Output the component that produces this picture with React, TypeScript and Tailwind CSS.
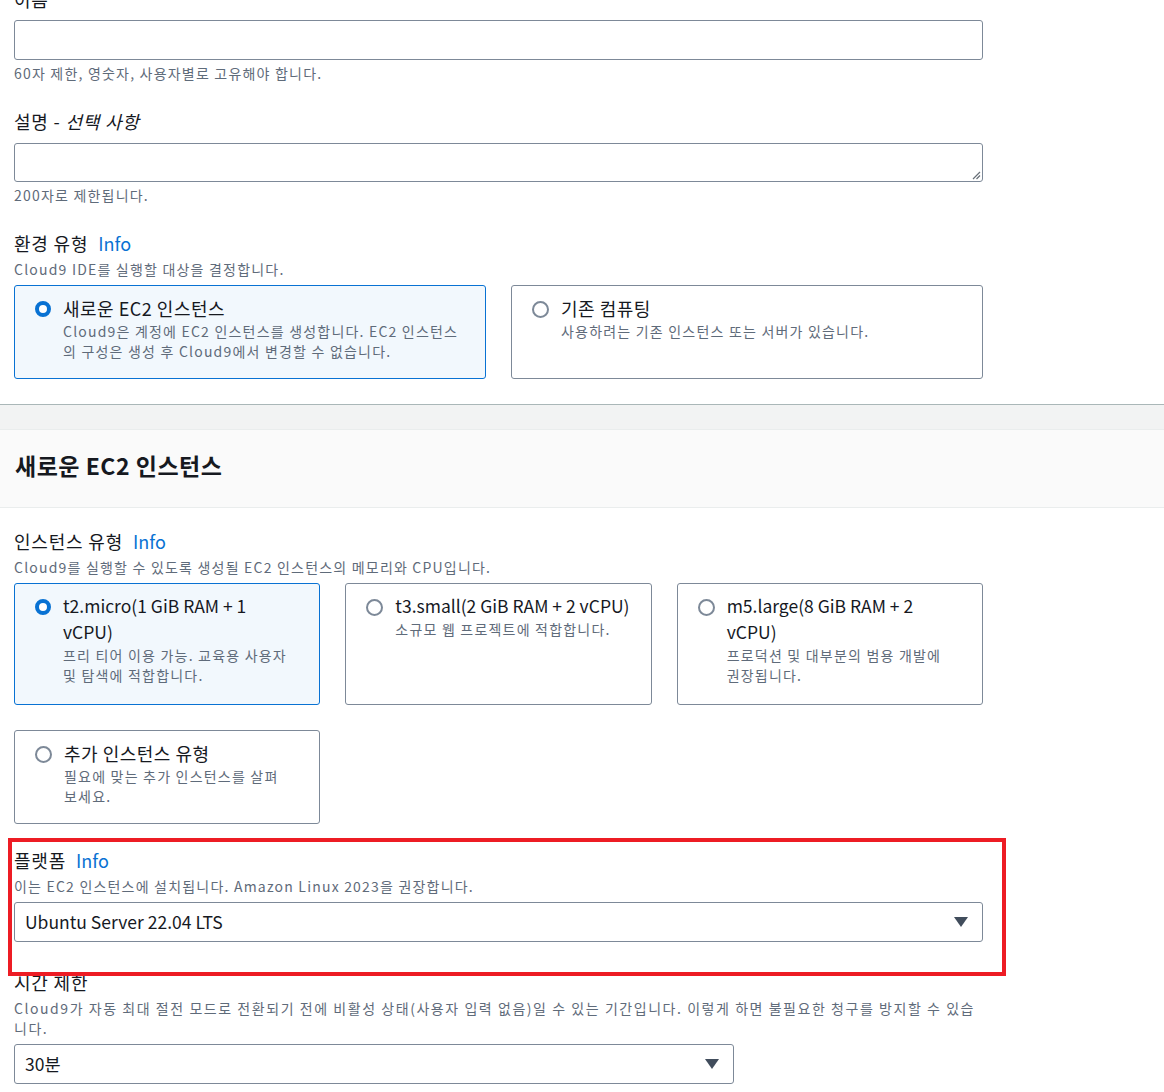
const font = { fontFamily: '"Noto Sans CJK KR", "Noto Sans", sans-serif' }

function Radio({ checked }: { checked?: boolean }) {
  return checked ? (
    <span className="mt-[6px] block h-4 w-4 shrink-0 rounded-full border-[4px] border-[#0972d3] bg-white" />
  ) : (
    <span className="mt-[6px] block h-[17px] w-[17px] shrink-0 rounded-full border-2 border-[#7d8998] bg-white" />
  )
}

function Card({
  title,
  desc,
  checked,
  latin,
  className = '',
}: {
  title: string
  desc: string
  checked?: boolean
  latin?: boolean
  className?: string
}) {
  return (
    <div
      className={
        'flex gap-[12px] rounded-[3px] border pl-5 pr-3 pt-[9px] pb-4 ' +
        (checked ? 'border-[#0972d3] bg-[#f2f8fd] ' : 'border-[#7d8998] bg-white ') +
        className
      }
    >
      <Radio checked={checked} />
      <div>
        <div
          className={
            'whitespace-pre-line leading-[26px] text-[#16191f] ' +
            (latin ? 'text-[17.5px]' : 'text-[18px] tracking-[0.5px]')
          }
        >
          {title}
        </div>
        <div className="whitespace-pre-line text-[14px] leading-[20px] tracking-[1.2px] text-[#5f6b7a]">{desc}</div>
      </div>
    </div>
  )
}

function Label({ text, info, italic }: { text: string; info?: boolean; italic?: string }) {
  return (
    <div className="text-[18px] leading-[26px] tracking-[0.8px] text-[#16191f]">
      {text}
      {italic && <i> {italic}</i>}
      {info && <span className="ml-[10px] tracking-normal text-[#0972d3]">Info</span>}
    </div>
  )
}

function Hint({ children, top, wide }: { children: React.ReactNode; top?: boolean; wide?: boolean }) {
  return (
    <div
      className={
        'text-[14px] leading-[20px] text-[#5f6b7a] ' +
        (wide ? 'tracking-[1.55px] ' : 'tracking-[1.2px] ') +
        (top ? 'mt-[3px]' : '')
      }
    >
      {children}
    </div>
  )
}

function Select({ value, className = '' }: { value: string; className?: string }) {
  return (
    <div
      className={
        'flex h-10 items-center justify-between rounded-[3px] border border-[#7d8998] bg-white pl-[10px] pr-[14px] ' +
        className
      }
    >
      <span className="text-[17.5px] text-[#16191f]">{value}</span>
      <svg width="14" height="10" viewBox="0 0 14 10">
        <path d="M0 0h14L7 10z" fill="#414d5c" />
      </svg>
    </div>
  )
}

export default function App() {
  return (
    <div className="relative min-h-screen overflow-hidden bg-white" style={font}>
      <div className="w-[969px] pl-[14px] -mt-[14px] box-content">
        <Label text="이름" />
        <div className="mt-[8px] h-10 rounded-[3px] border border-[#7d8998]" />
        <div className="mt-[3px]">
          <Hint>60자 제한, 영숫자, 사용자별로 고유해야 합니다.</Hint>
        </div>

        <div className="mt-[25px]">
          <Label text="설명 -" italic="선택 사항" />
        </div>
        <div className="relative mt-[9px] h-[39px] rounded-[3px] border border-[#7d8998]">
          <svg className="absolute right-[1px] bottom-[1px]" width="12" height="12" viewBox="0 0 12 12">
            <path d="M11 4L4 11M11 7.5L7.5 11" stroke="#687078" strokeWidth="1.2" />
          </svg>
        </div>
        <div className="mt-[3px]">
          <Hint>200자로 제한됩니다.</Hint>
        </div>

        <div className="mt-[25px]">
          <Label text="환경 유형" info />
        </div>
        <Hint top>Cloud9 IDE를 실행할 대상을 결정합니다.</Hint>
        <div className="mt-[6px] grid grid-cols-2 gap-[25px]">
          <Card
            checked
            className="h-[94px]"
            title="새로운 EC2 인스턴스"
            desc={'Cloud9은 계정에 EC2 인스턴스를 생성합니다. EC2 인스턴스\n의 구성은 생성 후 Cloud9에서 변경할 수 없습니다.'}
          />
          <Card className="h-[94px]" title="기존 컴퓨팅" desc="사용하려는 기존 인스턴스 또는 서버가 있습니다." />
        </div>
      </div>

      <div className="mt-[25px] h-[26px] border-t border-t-[#aab7b8] border-b border-b-[#eaeded] bg-[#f2f3f3]" />
      <div className="flex h-[78px] items-center border-b border-[#eaeded] bg-[#fafafa] pb-[6px] pl-[15px]">
        <h2 className="text-[23px] font-bold tracking-[0.5px] text-[#16191f]">새로운 EC2 인스턴스</h2>
      </div>

      <div className="w-[969px] pl-[14px] box-content pt-[20px]">
        <Label text="인스턴스 유형" info />
        <Hint top>Cloud9를 실행할 수 있도록 생성될 EC2 인스턴스의 메모리와 CPU입니다.</Hint>
        <div className="mt-[6px] grid grid-cols-3 gap-[25px]">
          <Card
            checked
            latin
            className="h-[122px]"
            title={'t2.micro(1 GiB RAM + 1\nvCPU)'}
            desc={'프리 티어 이용 가능. 교육용 사용자\n및 탐색에 적합합니다.'}
          />
          <Card
            latin
            className="h-[122px]"
            title="t3.small(2 GiB RAM + 2 vCPU)"
            desc="소규모 웹 프로젝트에 적합합니다."
          />
          <Card
            latin
            className="h-[122px]"
            title={'m5.large(8 GiB RAM + 2\nvCPU)'}
            desc={'프로덕션 및 대부분의 범용 개발에\n권장됩니다.'}
          />
          <Card className="h-[94px]" title="추가 인스턴스 유형" desc={'필요에 맞는 추가 인스턴스를 살펴\n보세요.'} />
        </div>

        <div className="mt-[23px]">
          <Label text="플랫폼" info />
        </div>
        <Hint top>이는 EC2 인스턴스에 설치됩니다. Amazon Linux 2023을 권장합니다.</Hint>
        <div className="mt-[6px]">
          <Select value="Ubuntu Server 22.04 LTS" />
        </div>

        <div className="mt-[27px]">
          <Label text="시간 제한" />
        </div>
        <Hint top wide>
          Cloud9가 자동 최대 절전 모드로 전환되기 전에 비활성 상태(사용자 입력 없음)일 수 있는 기간입니다. 이렇게 하면
          불필요한 청구를 방지할 수 있습니다.
        </Hint>
        <div className="mt-[6px]">
          <Select value="30분" className="w-[720px]" />
        </div>
      </div>

      <div className="pointer-events-none absolute left-[8px] top-[838px] h-[138px] w-[998px] border-[4px] border-[#ed1c24]" />
    </div>
  )
}
